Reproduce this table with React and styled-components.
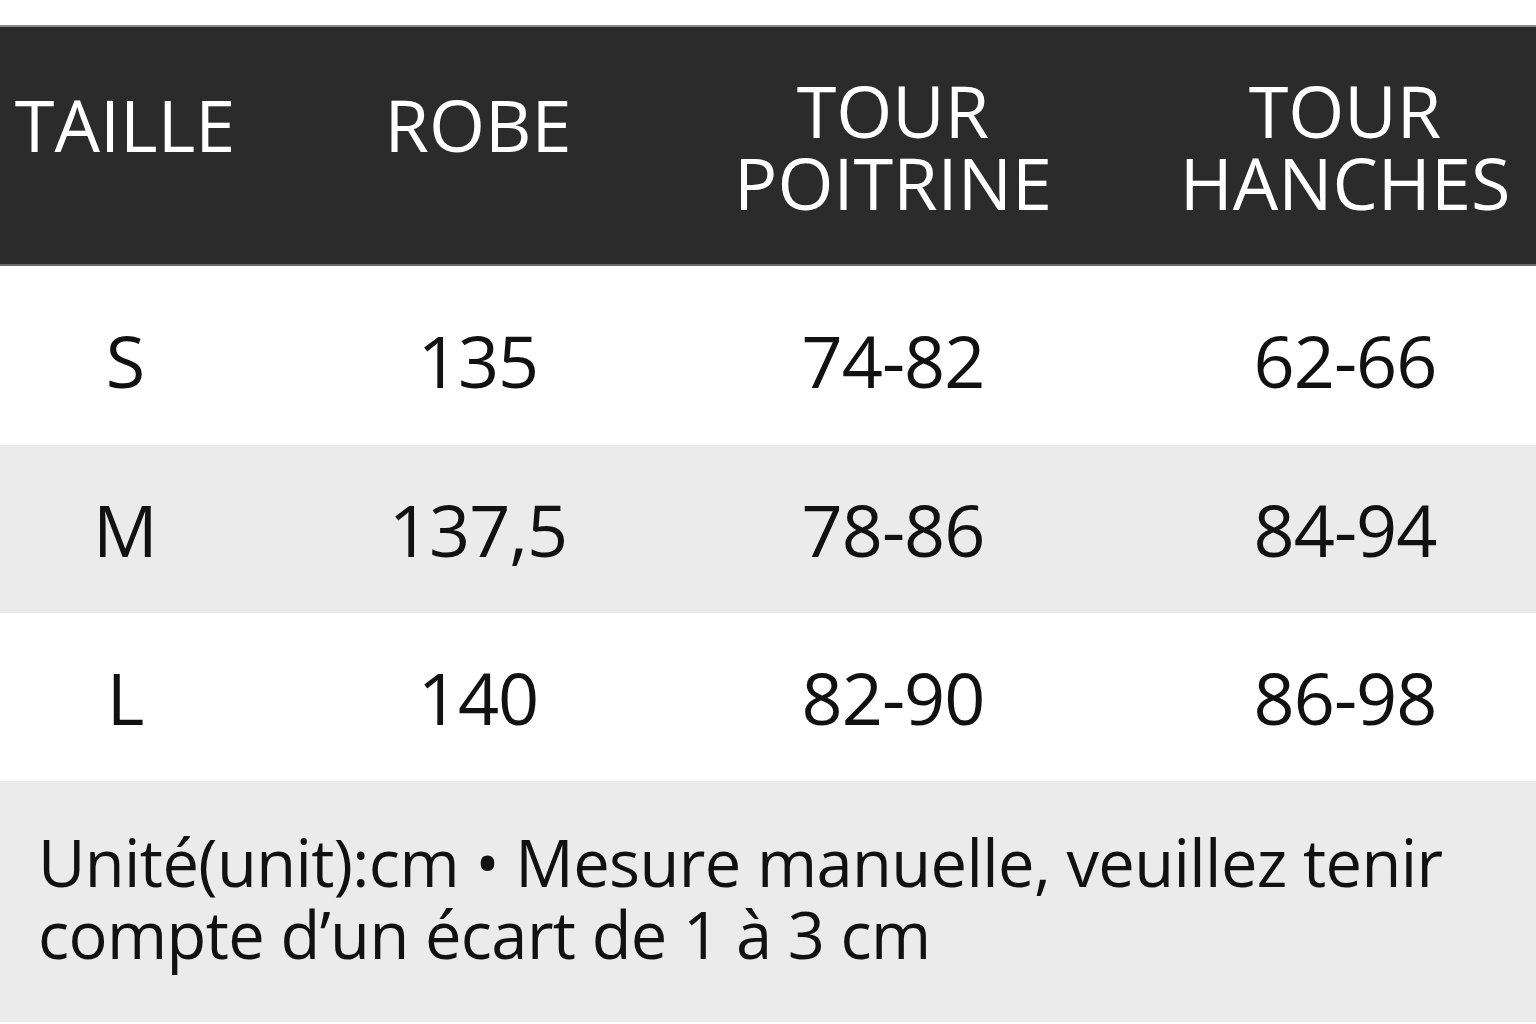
import React from 'react';
import styled, { createGlobalStyle } from 'styled-components';

const GlobalStyle = createGlobalStyle`
  html, body {
    margin: 0;
    padding: 0;
    background: #ffffff;
    overflow: hidden;
  }
`;

const Page = styled.div`
  width: 1536px;
  height: 1024px;
  overflow: hidden;
  background: #ffffff;
  padding-top: 25px;
  box-sizing: border-box;
  font-family: "Open Sans", "Noto Sans", sans-serif;
  font-weight: 500;
`;

const Table = styled.div`
  width: 1610px;
  display: flex;
  flex-direction: column;
`;

const Row = styled.div`
  display: grid;
  grid-template-columns: 250px 456px 374px 530px;
  height: ${(p) => p.$height}px;
  background: ${(p) => p.$bg};
  box-sizing: border-box;
  padding-top: ${(p) => p.$offset || 0}px;
`;

const HeaderRow = styled(Row)`
  border-top: 2px solid #8a8a8a;
  border-bottom: 2px solid #6a6a6a;
  background: #2b2b2b;
`;

const HeadCell = styled.div`
  display: flex;
  align-items: center;
  justify-content: center;
  text-align: center;
  color: #ffffff;
  font-size: 72px;
  line-height: 72px;
  padding-bottom: ${(p) => (p.$single ? 43 : 0)}px;
`;

const Cell = styled.div`
  display: flex;
  align-items: center;
  justify-content: center;
  color: #111111;
  font-size: 72px;
  line-height: 72px;
  letter-spacing: -1px;
`;

const Note = styled.div`
  width: 1536px;
  height: 241px;
  background: #ebebeb;
  box-sizing: border-box;
  padding: 45px 20px 0 38px;
  color: #111111;
  font-size: 65px;
  line-height: 72px;
  letter-spacing: -0.6px;
`;

const rows = [
  { size: 'S', robe: '135', poitrine: '74-82', hanches: '62-66', bg: '#ffffff', h: 179, off: 8 },
  { size: 'M', robe: '137,5', poitrine: '78-86', hanches: '84-94', bg: '#ebebeb', h: 168 },
  { size: 'L', robe: '140', poitrine: '82-90', hanches: '86-98', bg: '#ffffff', h: 168 },
];

export default function App() {
  return (
    <Page>
      <GlobalStyle />
      <Table>
        <HeaderRow $height={241}>
          <HeadCell $single>TAILLE</HeadCell>
          <HeadCell $single>ROBE</HeadCell>
          <HeadCell>TOUR<br />POITRINE</HeadCell>
          <HeadCell>TOUR<br />HANCHES</HeadCell>
        </HeaderRow>
        {rows.map((r) => (
          <Row key={r.size} $height={r.h} $bg={r.bg} $offset={r.off}>
            <Cell>{r.size}</Cell>
            <Cell>{r.robe}</Cell>
            <Cell>{r.poitrine}</Cell>
            <Cell>{r.hanches}</Cell>
          </Row>
        ))}
      </Table>
      <Note>
        Unité(unit):cm • Mesure manuelle, veuillez tenir compte d’un écart de 1 à 3 cm
      </Note>
    </Page>
  );
}
